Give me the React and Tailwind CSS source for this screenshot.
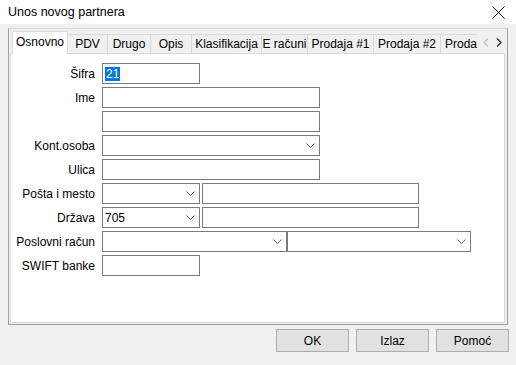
import React from 'react';

const tabs = [
  { label: 'PDV', w: 'w-[40px]' },
  { label: 'Drugo', w: 'w-[43px]' },
  { label: 'Opis', w: 'w-[41px]' },
  { label: 'Klasifikacija', w: 'w-[70px]' },
  { label: 'E računi', w: 'w-[46px]' },
  { label: 'Prodaja #1', w: 'w-[66px]' },
  { label: 'Prodaja #2', w: 'w-[67px]' },
];

function Chevron({ className = 'stroke-[#606060]' }) {
  return (
    <svg width="9" height="5" viewBox="0 0 9 5" className={className}>
      <polyline points="0.5,0.5 4.5,4.5 8.5,0.5" fill="none" strokeWidth="1" />
    </svg>
  );
}

function Input({ w, children }) {
  return (
    <div className={`${w} h-[21px] border border-[#7a7a7a] bg-white flex items-center pl-[2px]`}>
      {children}
    </div>
  );
}

function Select({ w, value }) {
  return (
    <div className={`${w} h-[21px] border border-[#7a7a7a] bg-white flex items-center justify-between pl-[2px] pr-[4px]`}>
      <span>{value}</span>
      <Chevron />
    </div>
  );
}

function Row({ label, children }) {
  return (
    <div className="flex items-center h-[21px]">
      <div className="w-[84px] text-right">{label}</div>
      <div className="ml-[7px] flex">{children}</div>
    </div>
  );
}

export default function App() {
  return (
    <div
      className="w-[516px] h-[365px] bg-[#f0f0f0] flex flex-col text-[12px] text-black overflow-hidden"
      style={{ fontFamily: '"Liberation Sans", Arial, sans-serif' }}
    >
      {/* Title bar */}
      <div className="h-[24px] bg-white flex items-center justify-between pl-2 pr-[11px]">
        <span className="pt-[1px] text-[12.5px]">Unos novog partnera</span>
        <svg width="13" height="13" viewBox="0 0 13 13" className="stroke-black">
          <line x1="0.5" y1="0.5" x2="12.5" y2="12.5" strokeWidth="1" />
          <line x1="12.5" y1="0.5" x2="0.5" y2="12.5" strokeWidth="1" />
        </svg>
      </div>

      {/* Page control frame */}
      <div className="px-2 pt-1">
        <div className="h-[297px] border border-t-[#d9d9d9] border-r-[#a0a0a0] border-b-[#a0a0a0] border-l-[#a0a0a0] pt-[2px] pl-[1px] pr-[2px] pb-px flex flex-col">
          {/* Tabs */}
          <div className="h-[22px] flex items-end pl-[2px] relative">
            <div className="w-[56px] shrink-0 h-[23px] -mb-px relative z-10 bg-white border border-b-0 border-[#d9d9d9] flex items-center justify-center pb-[2px]">
              Osnovno
            </div>
            <div className="flex-1 min-w-0 flex items-end overflow-hidden">
              {tabs.map((t) => (
                <div
                  key={t.label}
                  className={`${t.w} shrink-0 h-[19px] bg-[#f0f0f0] border-t border-r border-[#d9d9d9] flex items-center justify-center`}
                >
                  {t.label}
                </div>
              ))}
              <div className="w-[36px] shrink-0 h-[19px] bg-[#f0f0f0] border-t border-[#d9d9d9] flex items-center pl-[4px] whitespace-nowrap">
                Proda
              </div>
              <div className="w-[31px] shrink-0 h-[22px] bg-[#f0f0f0] flex items-center justify-around pl-[2px] pr-[2px]">
                <svg width="6" height="9" viewBox="0 0 6 9" className="stroke-[#c4c4c4]">
                  <polyline points="5,0.5 1,4.5 5,8.5" fill="none" strokeWidth="1.4" />
                </svg>
                <svg width="6" height="9" viewBox="0 0 6 9" className="stroke-[#333]">
                  <polyline points="1,0.5 5,4.5 1,8.5" fill="none" strokeWidth="1.4" />
                </svg>
              </div>
            </div>
          </div>

          {/* Tab content */}
          <div className="flex-1 bg-white border border-[#d9d9d9] pt-[9px] flex flex-col gap-[3px]">
            <Row label="Šifra">
              <Input w="w-[98px]">
                <span className="bg-[#0078d7] text-white leading-[14px] px-px">21</span>
              </Input>
            </Row>
            <Row label="Ime">
              <Input w="w-[218px]" />
            </Row>
            <Row label="">
              <Input w="w-[218px]" />
            </Row>
            <Row label="Kont.osoba">
              <Select w="w-[218px]" />
            </Row>
            <Row label="Ulica">
              <Input w="w-[218px]" />
            </Row>
            <Row label="Pošta i mesto">
              <Select w="w-[98px]" />
              <div className="ml-[2px]">
                <Input w="w-[217px]" />
              </div>
            </Row>
            <Row label="Država">
              <Select w="w-[98px]" value="705" />
              <div className="ml-[2px]">
                <Input w="w-[217px]" />
              </div>
            </Row>
            <Row label="Poslovni račun">
              <Select w="w-[185px]" />
              <Select w="w-[184px]" />
            </Row>
            <Row label="SWIFT banke">
              <Input w="w-[98px]" />
            </Row>
          </div>
        </div>
      </div>

      {/* Buttons */}
      <div className="flex justify-end gap-[7px] pr-[7px] mt-1">
        {['OK', 'Izlaz', 'Pomoć'].map((b) => (
          <button
            key={b}
            className="w-[73px] h-[23px] bg-[#e1e1e1] border border-[#adadad] flex items-center justify-center"
          >
            {b}
          </button>
        ))}
      </div>
    </div>
  );
}
